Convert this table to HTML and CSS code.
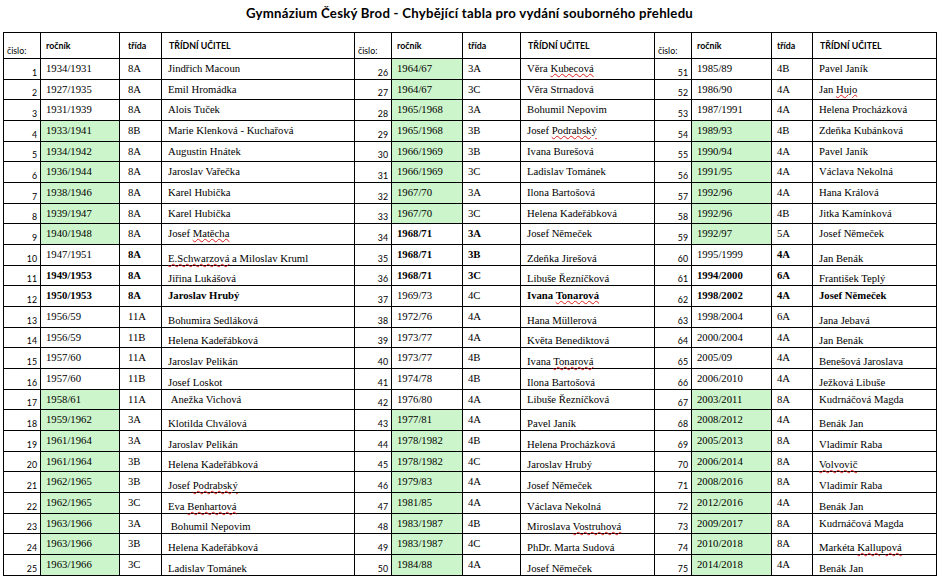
FILE: index.html
```html
<!DOCTYPE html>
<html lang="cs">
<head>
<meta charset="utf-8">
<title>Gymnázium Český Brod - Chybějící tabla</title>
<link rel="stylesheet" href="styles.css">
</head>
<body>
<div class="sheet">
  <div class="title">Gymnázium Český Brod - Chybějící tabla pro vydání souborného přehledu</div>
  <table class="grid">
    <colgroup>
      <col class="c-n"><col class="c-y1"><col class="c-t1"><col class="c-u1">
      <col class="c-n"><col class="c-y2"><col class="c-t2"><col class="c-u2">
      <col class="c-n"><col class="c-y3"><col class="c-t3"><col class="c-u3">
    </colgroup>
    <tr class="h">
      <th class="hn">čislo:</th><th>ročník</th><th class="t1">třída</th><th class="hu">TŘÍDNÍ UČITEL</th>
      <th class="hn">čislo:</th><th>ročník</th><th>třída</th><th class="hu">TŘÍDNÍ UČITEL</th>
      <th class="hn">čislo:</th><th>ročník</th><th>třída</th><th class="hu">TŘÍDNÍ UČITEL</th>
    </tr>
    <tr>
      <td class="n">1</td><td>1934/1931</td><td class="t1">8A</td><td class="u">Jindřich Macoun</td>
      <td class="n">26</td><td class="g">1964/67</td><td>3A</td><td class="u">Věra <span class="sp">Kubecová</span></td>
      <td class="n">51</td><td>1985/89</td><td>4B</td><td class="u">Pavel Janík</td>
    </tr>
    <tr>
      <td class="n">2</td><td>1927/1935</td><td class="t1">8A</td><td class="u">Emil Hromádka</td>
      <td class="n">27</td><td class="g">1964/67</td><td>3C</td><td class="u">Věra Strnadová</td>
      <td class="n">52</td><td>1986/90</td><td>4A</td><td class="u">Jan <span class="sp">Hujo</span></td>
    </tr>
    <tr>
      <td class="n">3</td><td>1931/1939</td><td class="t1">8A</td><td class="u">Alois Tuček</td>
      <td class="n">28</td><td class="g">1965/1968</td><td>3A</td><td class="u">Bohumil Nepovim</td>
      <td class="n">53</td><td>1987/1991</td><td>4A</td><td class="u">Helena Procházková</td>
    </tr>
    <tr>
      <td class="n">4</td><td class="g">1933/1941</td><td class="t1">8B</td><td class="u">Marie Klenková - Kuchařová</td>
      <td class="n">29</td><td class="g">1965/1968</td><td>3B</td><td class="u">Josef <span class="sp">Podrabský</span></td>
      <td class="n">54</td><td class="g">1989/93</td><td>4B</td><td class="u">Zdeňka Kubánková</td>
    </tr>
    <tr>
      <td class="n">5</td><td class="g">1934/1942</td><td class="t1">8A</td><td class="u">Augustin Hnátek</td>
      <td class="n">30</td><td class="g">1966/1969</td><td>3B</td><td class="u">Ivana Burešová</td>
      <td class="n">55</td><td class="g">1990/94</td><td>4A</td><td class="u">Pavel Janík</td>
    </tr>
    <tr>
      <td class="n">6</td><td class="g">1936/1944</td><td class="t1">8A</td><td class="u">Jaroslav Vařečka</td>
      <td class="n">31</td><td class="g">1966/1969</td><td>3C</td><td class="u">Ladislav Tománek</td>
      <td class="n">56</td><td class="g">1991/95</td><td>4A</td><td class="u">Václava Nekolná</td>
    </tr>
    <tr>
      <td class="n">7</td><td class="g">1938/1946</td><td class="t1">8A</td><td class="u">Karel Hubička</td>
      <td class="n">32</td><td class="g">1967/70</td><td>3A</td><td class="u">Ilona Bartošová</td>
      <td class="n">57</td><td class="g">1992/96</td><td>4A</td><td class="u">Hana Králová</td>
    </tr>
    <tr>
      <td class="n">8</td><td class="g">1939/1947</td><td class="t1">8A</td><td class="u">Karel Hubička</td>
      <td class="n">33</td><td class="g">1967/70</td><td>3C</td><td class="u">Helena Kadeřábková</td>
      <td class="n">58</td><td class="g">1992/96</td><td>4B</td><td class="u">Jitka Kamínková</td>
    </tr>
    <tr>
      <td class="n">9</td><td class="g">1940/1948</td><td class="t1">8A</td><td class="u">Josef <span class="sp">Matěcha</span></td>
      <td class="n">34</td><td class="b">1968/71</td><td class="b">3A</td><td class="u">Josef Němeček</td>
      <td class="n">59</td><td class="g">1992/97</td><td>5A</td><td class="u">Josef Němeček</td>
    </tr>
    <tr>
      <td class="n">10</td><td>1947/1951</td><td class="t1 b">8A</td><td class="u lo"><span class="sp">E.Schwarzová</span> a Miloslav Kruml</td>
      <td class="n">35</td><td class="b">1968/71</td><td class="b">3B</td><td class="u lo">Zdeňka Jirešová</td>
      <td class="n">60</td><td>1995/1999</td><td class="b">4A</td><td class="u lo">Jan Benák</td>
    </tr>
    <tr>
      <td class="n">11</td><td class="b">1949/1953</td><td class="t1 b">8A</td><td class="u lo">Jiřina Lukášová</td>
      <td class="n">36</td><td class="b">1968/71</td><td class="b">3C</td><td class="u lo">Libuše Řezníčková</td>
      <td class="n">61</td><td class="b">1994/2000</td><td class="b">6A</td><td class="u lo">František Teplý</td>
    </tr>
    <tr>
      <td class="n">12</td><td class="b">1950/1953</td><td class="t1 b">8A</td><td class="u b">Jaroslav Hrubý</td>
      <td class="n">37</td><td>1969/73</td><td>4C</td><td class="u b">Ivana <span class="sp">Tonarová</span></td>
      <td class="n">62</td><td class="b">1998/2002</td><td class="b">4A</td><td class="u b">Josef Němeček</td>
    </tr>
    <tr>
      <td class="n">13</td><td>1956/59</td><td class="t1">11A</td><td class="u lo">Bohumira Sedláková</td>
      <td class="n">38</td><td>1972/76</td><td>4A</td><td class="u lo">Hana Müllerová</td>
      <td class="n">63</td><td>1998/2004</td><td>6A</td><td class="u lo">Jana Jebavá</td>
    </tr>
    <tr>
      <td class="n">14</td><td>1956/59</td><td class="t1">11B</td><td class="u lo">Helena Kadeřábková</td>
      <td class="n">39</td><td>1973/77</td><td>4A</td><td class="u lo">Květa Benediktová</td>
      <td class="n">64</td><td>2000/2004</td><td>4A</td><td class="u lo">Jan Benák</td>
    </tr>
    <tr>
      <td class="n">15</td><td>1957/60</td><td class="t1">11A</td><td class="u lo">Jaroslav Pelikán</td>
      <td class="n">40</td><td>1973/77</td><td>4B</td><td class="u lo">Ivana <span class="sp">Tonarová</span></td>
      <td class="n">65</td><td>2005/09</td><td>4A</td><td class="u lo">Benešová Jaroslava</td>
    </tr>
    <tr>
      <td class="n">16</td><td>1957/60</td><td class="t1">11B</td><td class="u lo">Josef Loskot</td>
      <td class="n">41</td><td>1974/78</td><td>4B</td><td class="u lo">Ilona Bartošová</td>
      <td class="n">66</td><td>2006/2010</td><td>4A</td><td class="u lo">Ježková Libuše</td>
    </tr>
    <tr>
      <td class="n">17</td><td class="g">1958/61</td><td class="t1">11A</td><td class="u">&nbsp;Anežka Vichová</td>
      <td class="n">42</td><td>1976/80</td><td>4A</td><td class="u">Libuše Řezníčková</td>
      <td class="n">67</td><td class="g">2003/2011</td><td>8A</td><td class="u">Kudrnáčová Magda</td>
    </tr>
    <tr>
      <td class="n">18</td><td class="g">1959/1962</td><td class="t1">3A</td><td class="u lo">Klotilda Chválová</td>
      <td class="n">43</td><td class="g">1977/81</td><td>4A</td><td class="u lo">Pavel Janík</td>
      <td class="n">68</td><td class="g">2008/2012</td><td>4A</td><td class="u lo">Benák Jan</td>
    </tr>
    <tr>
      <td class="n">19</td><td class="g">1961/1964</td><td class="t1">3A</td><td class="u lo">Jaroslav Pelikán</td>
      <td class="n">44</td><td class="g">1978/1982</td><td>4B</td><td class="u lo">Helena Procházková</td>
      <td class="n">69</td><td class="g">2005/2013</td><td>8A</td><td class="u lo">Vladimír Raba</td>
    </tr>
    <tr>
      <td class="n">20</td><td class="g">1961/1964</td><td class="t1">3B</td><td class="u lo">Helena Kadeřábková</td>
      <td class="n">45</td><td class="g">1978/1982</td><td>4C</td><td class="u lo">Jaroslav Hrubý</td>
      <td class="n">70</td><td class="g">2006/2014</td><td>8A</td><td class="u lo"><span class="sp">Volvovič</span></td>
    </tr>
    <tr>
      <td class="n">21</td><td class="g">1962/1965</td><td class="t1">3B</td><td class="u lo">Josef <span class="sp">Podrabský</span></td>
      <td class="n">46</td><td class="g">1979/83</td><td>4A</td><td class="u lo">Josef Němeček</td>
      <td class="n">71</td><td class="g">2008/2016</td><td>8A</td><td class="u lo">Vladimír Raba</td>
    </tr>
    <tr>
      <td class="n">22</td><td class="g">1962/1965</td><td class="t1">3C</td><td class="u lo">Eva <span class="sp">Benhartová</span></td>
      <td class="n">47</td><td class="g">1981/85</td><td>4A</td><td class="u lo">Václava Nekolná</td>
      <td class="n">72</td><td class="g">2012/2016</td><td>4A</td><td class="u lo">Benák Jan</td>
    </tr>
    <tr>
      <td class="n">23</td><td class="g">1963/1966</td><td class="t1">3A</td><td class="u lo">&nbsp;Bohumil Nepovim</td>
      <td class="n">48</td><td class="g">1983/1987</td><td>4B</td><td class="u lo">Miroslava <span class="sp">Vostruhová</span></td>
      <td class="n">73</td><td class="g">2009/2017</td><td>8A</td><td class="u">Kudrnáčová Magda</td>
    </tr>
    <tr>
      <td class="n">24</td><td class="g">1963/1966</td><td class="t1">3B</td><td class="u lo">Helena Kadeřábková</td>
      <td class="n">49</td><td class="g">1983/1987</td><td>4C</td><td class="u lo">PhDr. Marta Sudová</td>
      <td class="n">74</td><td class="g">2010/2018</td><td>8A</td><td class="u lo">Markéta <span class="sp">Kallupová</span></td>
    </tr>
    <tr>
      <td class="n">25</td><td class="g">1963/1966</td><td class="t1">3C</td><td class="u lo">Ladislav Tománek</td>
      <td class="n">50</td><td class="g">1984/88</td><td>4A</td><td class="u lo">Josef Němeček</td>
      <td class="n">75</td><td class="g">2014/2018</td><td>4A</td><td class="u lo">Benák Jan</td>
    </tr>
  </table>
</div>
</body>
</html>
```

FILE: styles.css
```css
html, body {
  margin: 0;
  padding: 0;
  background: #ffffff;
}

.sheet {
  width: 933px;
  padding-left: 3px;
}

.title {
  box-sizing: border-box;
  height: 32px;
  padding-top: 5px;
  line-height: 16px;
  text-align: center;
  font-family: Lato, "Open Sans", sans-serif;
  font-weight: 700;
  font-size: 13.2px;
  letter-spacing: 0.25px;
  color: #000;
}

.grid {
  border-collapse: collapse;
  table-layout: fixed;
  width: 933px;
  color: #000;
}

.c-n { width: 37px; }
.c-y1 { width: 79px; }
.c-t1 { width: 42px; }
.c-u1 { width: 193px; }
.c-y2 { width: 71px; }
.c-t2 { width: 58px; }
.c-u2 { width: 134px; }
.c-y3 { width: 80px; }
.c-t3 { width: 41px; }
.c-u3 { width: 124px; }

.grid tr {
  height: 20.68px;
}

.grid tr.h {
  height: 26px;
}

.grid th,
.grid td {
  border: 1px solid #000;
  white-space: nowrap;
}

.grid th {
  font-family: Lato, "Open Sans", sans-serif;
  font-weight: 700;
  font-size: 8.8px;
  text-align: left;
  vertical-align: middle;
  padding: 0 0 1px 5px;
}

.grid th.hn {
  font-weight: 400;
  vertical-align: bottom;
  padding: 0 0 2px 3px;
}

.grid th.hu {
  padding-left: 7px;
}

.grid td {
  font-family: "Liberation Serif", "Times New Roman", serif;
  font-size: 10.7px;
  line-height: 14px;
  vertical-align: top;
  padding: 2px 2px 0 5px;
}

.grid td.n {
  font-family: Lato, "Open Sans", sans-serif;
  font-size: 8.8px;
  line-height: 11px;
  text-align: right;
  vertical-align: bottom;
  padding: 0 3px 1px 0;
}

.grid td.u {
  padding-left: 6px;
}

.grid td.lo {
  vertical-align: bottom;
  padding-top: 0;
  padding-bottom: 0;
}

.grid .t1 {
  padding-left: 8px;
}

.grid td.g {
  background: #cdf5cb;
}

.grid td.b {
  font-weight: 700;
}

.sp {
  text-decoration-line: underline;
  text-decoration-style: wavy;
  text-decoration-color: #e0201c;
  text-decoration-thickness: 1px;
  text-underline-offset: 1px;
}
```
